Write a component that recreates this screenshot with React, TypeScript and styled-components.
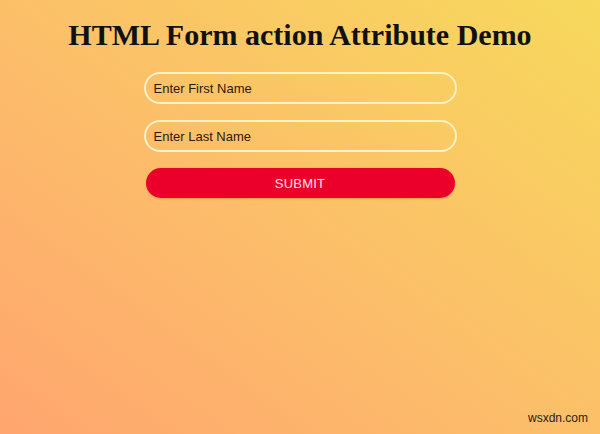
import React from "react";
import styled, { createGlobalStyle } from "styled-components";

const Global = createGlobalStyle`
  html, body { margin: 0; padding: 0; }
  body { font-family: "Liberation Sans", Arial, sans-serif; }
`;

const Page = styled.div`
  position: relative;
  width: 600px;
  height: 434px;
  box-sizing: border-box;
  overflow: hidden;
  background: linear-gradient(to top right, #ffa56f 0%, #fcbd6a 45%, #f7d95c 100%);
  display: flex;
  flex-direction: column;
  align-items: center;
  padding-top: 15px;
`;

const Title = styled.h1`
  margin: 0;
  font-family: "Liberation Serif", "Times New Roman", serif;
  font-weight: bold;
  font-size: 30px;
  line-height: 40px;
  color: #111;
`;

const Form = styled.form`
  margin-top: 17px;
  width: 313px;
  display: flex;
  flex-direction: column;
  align-items: center;
  gap: 16px;
`;

const Input = styled.input`
  width: 100%;
  height: 32px;
  box-sizing: border-box;
  border: 2px solid #fdf1c6;
  border-radius: 16px;
  background: transparent;
  padding: 0 0 0 8px;
  font-family: "Liberation Sans", Arial, sans-serif;
  font-size: 13px;
  color: #2a1a0c;
  outline: none;
  &::placeholder { color: #2a1a0c; opacity: 1; }
`;

const Button = styled.button`
  width: 309px;
  height: 30px;
  border: none;
  border-radius: 15px;
  background: #ea002b;
  box-shadow: 0 1px 2px rgba(150, 60, 0, 0.25);
  color: #ffe4e8;
  font-family: "Liberation Sans", Arial, sans-serif;
  font-size: 13px;
  letter-spacing: 0.2px;
  cursor: pointer;
`;

const Watermark = styled.div`
  position: absolute;
  right: 12px;
  bottom: 9px;
  font-family: "Liberation Sans", Arial, sans-serif;
  font-size: 12px;
  color: #2b2016;
`;

export default function App() {
  return (
    <>
      <Global />
      <Page>
        <Title>HTML Form action Attribute Demo</Title>
        <Form onSubmit={(e) => e.preventDefault()}>
          <Input type="text" placeholder="Enter First Name" />
          <Input type="text" placeholder="Enter Last Name" />
          <Button type="submit">SUBMIT</Button>
        </Form>
        <Watermark>wsxdn.com</Watermark>
      </Page>
    </>
  );
}
